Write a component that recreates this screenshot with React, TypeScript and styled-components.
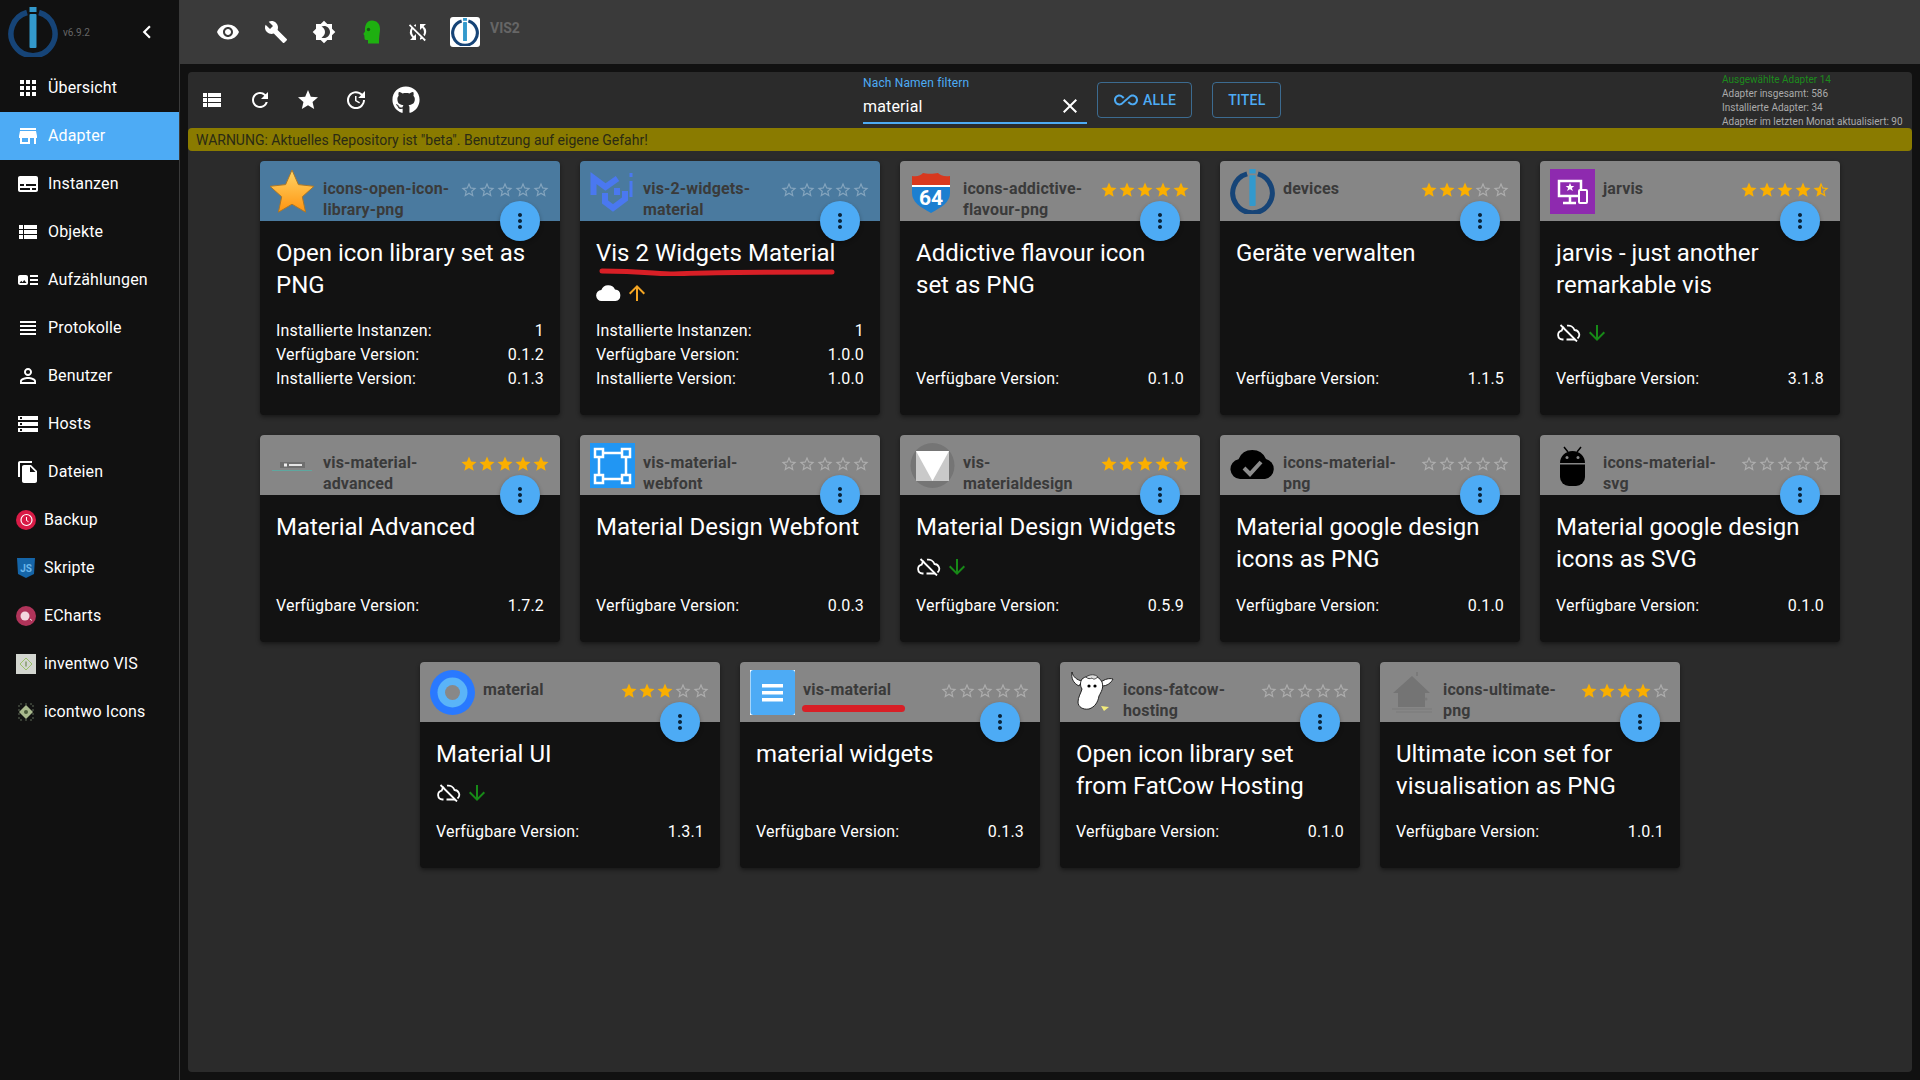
import * as React from "react";
import styled, { createGlobalStyle } from "styled-components";
import { FaGithub } from "react-icons/fa";
import {
  MdAllInclusive,
  MdApps,
  MdArrowDownward,
  MdArrowUpward,
  MdArtTrack,
  MdBrightness4,
  MdBuild,
  MdChevronLeft,
  MdClose,
  MdFileCopy,
  MdMoreVert,
  MdPersonOutline,
  MdRefresh,
  MdStar,
  MdStarBorder,
  MdStarHalf,
  MdStorage,
  MdStore,
  MdSubtitles,
  MdSyncDisabled,
  MdUpdate,
  MdViewHeadline,
  MdViewList,
  MdVisibility,
} from "react-icons/md";

const GlobalStyle = createGlobalStyle`
  html, body {
    margin: 0;
    height: 100%;
    background: #111;
    font-family: Roboto, "Liberation Sans", sans-serif;
    color: #fff;
  }
  #root {
    height: 100%;
  }
`;

/* drawings */

const IoLogo: React.FC<{ size: number }> = ({ size }) => (
  <svg width={size} height={size} viewBox="0 0 50 50">
    <path
      d="M19 5.500a22 22 0 1 0 12 0"
      fill="none"
      stroke="#164477"
      strokeWidth="5.500"
    />
    <rect x="21.500" y="0" width="7" height="5" fill="#3399cc" />
    <rect x="21.500" y="7" width="7" height="34" rx="1" fill="#3399cc" />
  </svg>
);

const StarLogo = () => (
  <svg width="45" height="45" viewBox="0 0 45 45">
    <defs>
      <linearGradient id="starFill" x1="0" y1="0" x2="0" y2="1">
        <stop offset="0" stopColor="#ffd566" />
        <stop offset="1" stopColor="#ff9410" />
      </linearGradient>
    </defs>
    <path
      d="M22 1l6.400 14.600 15.600 1.700-11.700 10.500 3.300 15.400L22 35.200 8.400 43.200l3.300-15.400L0 17.300l15.600-1.700z"
      fill="url(#starFill)"
      stroke="#a9772a"
      strokeWidth="1"
      strokeLinejoin="round"
    />
  </svg>
);

const MjLogo = () => (
  <svg width="45" height="45" viewBox="0 0 45 45" fill="none">
    <path d="M3.500 26V9l12 9 12-8.500" stroke="#4a78f0" strokeWidth="6" />
    <path d="M35 22v8l-12 9-8-6v-9" stroke="#4a78f0" strokeWidth="6" />
    <path d="M27 19v7" stroke="#4a78f0" strokeWidth="6" />
    <path d="M41 4v4M41 12v16" stroke="#4a78f0" strokeWidth="3" />
  </svg>
);

const ShieldLogo = () => (
  <svg width="45" height="45" viewBox="0 0 45 45">
    <path d="M2 7c6 1 9-1 11-3 3 1 11 1 15 0 2 2 6 4 12 3v10H2z" fill="#d8381e" />
    <rect x="2" y="16" width="38" height="2" fill="#fff" />
    <path d="M2 18h38v6c0 9-8 14-19 20C10 38 2 33 2 24z" fill="#1c7fd0" />
    <text
      x="21"
      y="36"
      fontFamily="Roboto, sans-serif"
      fontWeight="700"
      fontSize="21"
      fill="#fff"
      textAnchor="middle"
    >
      64
    </text>
  </svg>
);

const JarvisLogo = () => (
  <svg width="45" height="45" viewBox="0 0 45 45">
    <rect width="45" height="45" fill="#8e2aaf" />
    <path
      d="M9 12h22v15H9zM20 27v6M13 34h13"
      fill="none"
      stroke="#fff"
      strokeWidth="2.500"
    />
    <path
      d="M20 14l1.300 3h3l-2.400 2 1 3-2.900-1.800-2.900 1.800 1-3-2.400-2h3z"
      fill="#fff"
    />
    <rect
      x="29"
      y="21"
      width="8"
      height="13"
      rx="1"
      fill="#8e2aaf"
      stroke="#fff"
      strokeWidth="2"
    />
  </svg>
);

const BannerLogo = () => (
  <svg width="45" height="45" viewBox="0 0 45 45">
    <rect x="10" y="19" width="25" height="6" fill="#6f6f6f" />
    <rect x="14" y="20.500" width="3" height="3" fill="#eee" />
    <rect x="19" y="21" width="13" height="2" fill="#e5e5e5" />
    <rect x="2" y="27" width="40" height="1" fill="#5ea79f" />
  </svg>
);

const NodesLogo = () => (
  <svg width="45" height="45" viewBox="0 0 45 45" fill="none">
    <rect width="45" height="45" fill="#2196f3" />
    <path
      d="M12 10h21M12 36h21M9 13v20M36 13v20"
      stroke="#fff"
      strokeWidth="2.500"
    />
    <rect x="5" y="6" width="8" height="8" stroke="#fff" strokeWidth="2.500" />
    <rect x="32" y="6" width="8" height="8" stroke="#fff" strokeWidth="2.500" />
    <rect x="5" y="32" width="8" height="8" stroke="#fff" strokeWidth="2.500" />
    <rect x="32" y="32" width="8" height="8" stroke="#fff" strokeWidth="2.500" />
  </svg>
);

const TriangleLogo = () => (
  <svg width="45" height="45" viewBox="0 0 45 45">
    <ellipse cx="22.500" cy="22.500" rx="22" ry="22.500" fill="#757575" />
    <rect x="6" y="8" width="33" height="30" fill="#c9c9c9" />
    <path d="M6 8h33L22.500 38z" fill="#fff" />
  </svg>
);

const CloudCheckLogo = () => (
  <svg width="45" height="45" viewBox="0 0 45 45">
    <path
      d="M10 36a10 10 0 0 1-1.500-19.800A15 15 0 0 1 36 16a10.200 10.200 0 0 1-1 20z"
      fill="#000"
    />
    <path d="M14 25l6 6 11-12" fill="none" stroke="#8c8c8c" strokeWidth="4" />
  </svg>
);

const AndroidLogo = () => (
  <svg width="45" height="45" viewBox="0 0 45 45">
    <path d="M14 4l4 5M31 4l-4 5" stroke="#000" strokeWidth="1.500" />
    <path d="M10 20c0-7 5.500-12 12.500-12S35 13 35 20z" fill="#000" />
    <circle cx="17" cy="14.500" r="1.500" fill="#888" />
    <circle cx="28" cy="14.500" r="1.500" fill="#888" />
    <path d="M10 21.500h25V34a9 9 0 0 1-9 9h-7a9 9 0 0 1-9-9z" fill="#000" />
  </svg>
);

const RingsLogo = () => (
  <svg width="45" height="45" viewBox="0 0 45 45">
    <circle cx="22.500" cy="22.500" r="22.500" fill="#2979ff" />
    <circle cx="22.500" cy="22.500" r="15" fill="#5ab4f8" />
    <circle cx="22.500" cy="22.500" r="7.500" fill="#888" />
  </svg>
);

const DocLogo = () => (
  <svg width="45" height="45" viewBox="0 0 45 45">
    <rect width="45" height="45" fill="#fff" />
    <rect x="0.500" y="0" width="44.500" height="45" rx="3" fill="#4dabf5" />
    <rect x="12" y="14" width="21" height="3.500" fill="#fff" />
    <rect x="12" y="21" width="21" height="3.500" fill="#fff" />
    <rect x="12" y="28" width="21" height="3.500" fill="#fff" />
  </svg>
);

const CowLogo = () => (
  <svg width="45" height="45" viewBox="0 0 45 45">
    <path
      d="M12 11C7 10 3 7 2 2c-1 6 1 11 7 14zM31 12c4-3 8-4 12-3-2 4-6 7-11 7z"
      fill="#fff"
      stroke="#222"
    />
    <path
      d="M12 9c6-5 17-4 20 3 2 6-1 10-3 14-1 6-4 11-10 13-6 1-11-2-11-7 0-5 3-9 4-13-2-3-2-7 0-10z"
      fill="#fff"
      stroke="#222"
    />
    <path d="M16 7c4-3 9-3 12 0-3 2-4 3-6 1-2 1-4 1-6-1z" fill="#ddd" stroke="#444" />
    <circle cx="19" cy="16" r="1.600" fill="#000" />
    <circle cx="25" cy="16" r="1.600" fill="#000" />
    <path d="M31 36l8 1-5 4z" fill="#f3ec7a" />
  </svg>
);

const HouseLogo = () => (
  <svg width="45" height="45" viewBox="0 0 45 45">
    <path d="M22 6L3 23h5v14h27V23h5z" fill="#747474" />
    <rect x="26" y="2" width="2" height="4" fill="#7a7a7a" />
    <circle cx="36" cy="29" r="1.500" fill="#7a7a7a" />
    <path d="M2 39h40M6 42h36" stroke="#7a7a7a" />
  </svg>
);

const HeadIcon = () => (
  <svg width="18" height="24" viewBox="0 0 18 24">
    <path
      d="M9 .5c5 0 8 3.500 8 8.500 0 4-1 6-1 14.500H5V20H3c-1 0-1.500-1-1.500-2l-.2-2.800-1-1.200L2 11.500C1.500 5 4 .500 9 .5z"
      fill="#1eb010"
    />
    <circle cx="5.500" cy="9.500" r="1.700" fill="#145c10" />
  </svg>
);

const CloudIcon = () => (
  <svg width="25" height="17" viewBox="0 0 25 17">
    <path
      d="M6 17A5.500 5.500 0 0 1 5.300 6 7.500 7.500 0 0 1 19 5.500 5.800 5.800 0 0 1 19.500 17z"
      fill="#fff"
    />
  </svg>
);

const CloudOffIcon = () => (
  <svg width="25" height="18" viewBox="0 0 25 18" fill="none" stroke="#fff">
    <path
      d="M7.500 15.500H6.500a4.500 4.500 0 0 1-.8-8.900A6.500 6.500 0 0 1 8 3M11 1.700A6.500 6.500 0 0 1 18.500 6a4.800 4.800 0 0 1 3 8.500M19 15.500H10.500"
      strokeWidth="1.800"
    />
    <path d="M4.500 1L21 17.500" strokeWidth="1.800" />
  </svg>
);

const BackupIcon = () => (
  <svg width="20" height="20" viewBox="0 0 20 20">
    <circle cx="10" cy="10" r="10" fill="#d81b46" />
    <circle cx="10.500" cy="10" r="5.500" fill="none" stroke="#fff" strokeWidth="1.200" />
    <path d="M10.500 7v3.500l2 1.200" fill="none" stroke="#fff" />
  </svg>
);

const ScriptIcon = () => (
  <svg width="20" height="20" viewBox="0 0 20 20">
    <path d="M1 0h18l-1 16-8 4-8-4z" fill="#1565a8" />
    <text
      x="10"
      y="14"
      fontFamily="Roboto, sans-serif"
      fontWeight="700"
      fontSize="10"
      fill="#6bb5ea"
      textAnchor="middle"
    >
      JS
    </text>
  </svg>
);

const ChartIcon = () => (
  <svg width="20" height="20" viewBox="0 0 20 20">
    <circle cx="10" cy="10" r="10" fill="#b0345a" />
    <circle cx="9" cy="10" r="4.500" fill="#f3d7df" />
    <path d="M14 13l2 1.500" stroke="#f3d7df" />
  </svg>
);

const InventIcon = () => (
  <svg width="20" height="20" viewBox="0 0 20 20">
    <rect width="20" height="20" fill="#d3d6d0" />
    <path d="M10 4l6 6-6 6-6-6z" fill="none" stroke="#9bc06a" />
    <rect x="9.500" y="7.500" width="1" height="5" fill="#5e7a3a" />
  </svg>
);

const ChipIcon = () => (
  <svg width="20" height="20" viewBox="0 0 20 20">
    <path
      d="M2 4h2M2 8h2M2 12h2M2 16h2M16 4h2M16 8h2M16 12h2M16 16h2M5 1v2M10 1v2M15 1v2M5 17v2M10 17v2M15 17v2"
      stroke="#5f6b58"
    />
    <path d="M10 3l7 7-7 7-7-7z" fill="#a9b98d" />
    <circle cx="10" cy="10" r="2" fill="#4a5a3a" />
  </svg>
);

/* data */

const menu = [
  { label: "Übersicht", icon: <MdApps size={24} /> },
  { label: "Adapter", icon: <MdStore size={24} />, active: true },
  { label: "Instanzen", icon: <MdSubtitles size={24} /> },
  { label: "Objekte", icon: <MdViewList size={24} /> },
  { label: "Aufzählungen", icon: <MdArtTrack size={24} /> },
  { label: "Protokolle", icon: <MdViewHeadline size={24} /> },
  { label: "Benutzer", icon: <MdPersonOutline size={24} /> },
  { label: "Hosts", icon: <MdStorage size={24} /> },
  { label: "Dateien", icon: <MdFileCopy size={24} /> },
  { label: "Backup", icon: <BackupIcon /> },
  { label: "Skripte", icon: <ScriptIcon /> },
  { label: "ECharts", icon: <ChartIcon /> },
  { label: "inventwo VIS", icon: <InventIcon /> },
  { label: "icontwo Icons", icon: <ChipIcon /> },
];

type Adapter = {
  name: string;
  title: string;
  logo: React.ReactNode;
  rating: number;
  instances?: string;
  available: string;
  installed?: string;
  status?: "update" | "offline";
  scribble?: "title" | "name";
};

const adapters: Adapter[] = [
  {
    name: "icons-open-icon-library-png",
    title: "Open icon library set as PNG",
    logo: <StarLogo />,
    rating: 0,
    instances: "1",
    available: "0.1.2",
    installed: "0.1.3",
  },
  {
    name: "vis-2-widgets-material",
    title: "Vis 2 Widgets Material",
    logo: <MjLogo />,
    rating: 0,
    instances: "1",
    available: "1.0.0",
    installed: "1.0.0",
    status: "update",
    scribble: "title",
  },
  {
    name: "icons-addictive-flavour-png",
    title: "Addictive flavour icon set as PNG",
    logo: <ShieldLogo />,
    rating: 5,
    available: "0.1.0",
  },
  {
    name: "devices",
    title: "Geräte verwalten",
    logo: <IoLogo size={45} />,
    rating: 3,
    available: "1.1.5",
  },
  {
    name: "jarvis",
    title: "jarvis - just another remarkable vis",
    logo: <JarvisLogo />,
    rating: 4.5,
    available: "3.1.8",
    status: "offline",
  },
  {
    name: "vis-material-advanced",
    title: "Material Advanced",
    logo: <BannerLogo />,
    rating: 5,
    available: "1.7.2",
  },
  {
    name: "vis-material-webfont",
    title: "Material Design Webfont",
    logo: <NodesLogo />,
    rating: 0,
    available: "0.0.3",
  },
  {
    name: "vis-materialdesign",
    title: "Material Design Widgets",
    logo: <TriangleLogo />,
    rating: 5,
    available: "0.5.9",
    status: "offline",
  },
  {
    name: "icons-material-png",
    title: "Material google design icons as PNG",
    logo: <CloudCheckLogo />,
    rating: 0,
    available: "0.1.0",
  },
  {
    name: "icons-material-svg",
    title: "Material google design icons as SVG",
    logo: <AndroidLogo />,
    rating: 0,
    available: "0.1.0",
  },
  {
    name: "material",
    title: "Material UI",
    logo: <RingsLogo />,
    rating: 3,
    available: "1.3.1",
    status: "offline",
  },
  {
    name: "vis-material",
    title: "material widgets",
    logo: <DocLogo />,
    rating: 0,
    available: "0.1.3",
    scribble: "name",
  },
  {
    name: "icons-fatcow-hosting",
    title: "Open icon library set from FatCow Hosting",
    logo: <CowLogo />,
    rating: 0,
    available: "0.1.0",
  },
  {
    name: "icons-ultimate-png",
    title: "Ultimate icon set for visualisation as PNG",
    logo: <HouseLogo />,
    rating: 4,
    available: "1.0.1",
  },
];

const Rating: React.FC<{ value: number }> = ({ value }) => (
  <Stars>
    {[1, 2, 3, 4, 5].map((n) => {
      if (value >= n) return <MdStar key={n} size={18} color="#faaf00" />;
      if (value >= n - 0.5) return <MdStarHalf key={n} size={18} color="#faaf00" />;
      return <EmptyStar key={n} size={18} />;
    })}
  </Stars>
);

const AdapterCard: React.FC<Adapter> = ({
  name,
  title,
  logo,
  rating,
  instances,
  available,
  installed,
  status,
  scribble,
}) => (
  <Card>
    <CardHeader $installed={!!installed}>
      <Logo>{logo}</Logo>
      <Name>{name}</Name>
      <Rating value={rating} />
    </CardHeader>
    <Fab>
      <MdMoreVert size={24} />
    </Fab>
    {scribble === "title" && (
      <TitleScribble viewBox="0 0 236 8" width="236" height="8">
        <path
          d="M3 3c40 0 55 3 72 3 30-2 100-2 158-2"
          fill="none"
          stroke="#d81f26"
          strokeWidth="5"
          strokeLinecap="round"
        />
      </TitleScribble>
    )}
    {scribble === "name" && <NameScribble />}
    <CardBody>
      <Title>{title}</Title>
      {status === "update" && (
        <StatusRow>
          <CloudIcon />
          <MdArrowUpward size={24} color="#f5a623" />
        </StatusRow>
      )}
      {status === "offline" && (
        <StatusRow>
          <CloudOffIcon />
          <MdArrowDownward size={24} color="#178a17" />
        </StatusRow>
      )}
      <InfoList>
        {instances && (
          <InfoRow>
            <span>Installierte Instanzen:</span>
            <span>{instances}</span>
          </InfoRow>
        )}
        <InfoRow>
          <span>Verfügbare Version:</span>
          <span>{available}</span>
        </InfoRow>
        {installed && (
          <InfoRow>
            <span>Installierte Version:</span>
            <span>{installed}</span>
          </InfoRow>
        )}
      </InfoList>
    </CardBody>
  </Card>
);

export default function App() {
  return (
    <>
      <GlobalStyle />
      <Page>
        <Sidebar>
          <Brand>
            <IoLogo size={50} />
            <Version>v6.9.2</Version>
            <Collapse>
              <MdChevronLeft size={26} />
            </Collapse>
          </Brand>
          {menu.map((item) => (
            <MenuItem key={item.label} $active={item.active}>
              {item.icon}
              <MenuLabel>{item.label}</MenuLabel>
            </MenuItem>
          ))}
        </Sidebar>

        <Main>
          <TopBar>
            <IconButton>
              <MdVisibility size={24} />
            </IconButton>
            <IconButton>
              <MdBuild size={24} />
            </IconButton>
            <IconButton>
              <MdBrightness4 size={24} />
            </IconButton>
            <IconButton>
              <HeadIcon />
            </IconButton>
            <SyncButton>
              <MdSyncDisabled size={24} />
            </SyncButton>
            <HostLogo>
              <IoLogo size={28} />
            </HostLogo>
            <HostName>VIS2</HostName>
          </TopBar>

          <Content>
            <Panel>
              <Toolbar>
                <ToolIcons>
                  <IconButton>
                    <MdViewList size={24} />
                  </IconButton>
                  <IconButton>
                    <MdRefresh size={24} />
                  </IconButton>
                  <IconButton>
                    <MdStar size={24} />
                  </IconButton>
                  <IconButton>
                    <MdUpdate size={24} />
                  </IconButton>
                  <GithubButton>
                    <FaGithub size={28} />
                  </GithubButton>
                </ToolIcons>
                <Filter>
                  <FilterLabel>Nach Namen filtern</FilterLabel>
                  <FilterInput>
                    <span>material</span>
                    <MdClose size={24} />
                  </FilterInput>
                </Filter>
                <OutlineButton>
                  <MdAllInclusive size={24} />
                  ALLE
                </OutlineButton>
                <OutlineButton>TITEL</OutlineButton>
                <Stats>
                  <StatLine $green>Ausgewählte Adapter 14</StatLine>
                  <StatLine>Adapter insgesamt: 586</StatLine>
                  <StatLine>Installierte Adapter: 34</StatLine>
                  <StatLine>Adapter im letzten Monat aktualisiert: 90</StatLine>
                </Stats>
              </Toolbar>
              <Warning>
                WARNUNG: Aktuelles Repository ist "beta". Benutzung auf eigene Gefahr!
              </Warning>
              <CardGrid>
                {adapters.map((adapter) => (
                  <AdapterCard key={adapter.name} {...adapter} />
                ))}
              </CardGrid>
            </Panel>
          </Content>
        </Main>
      </Page>
    </>
  );
}

const Page = styled.div`
  display: flex;
  height: 100vh;
  overflow: hidden;
  background: #111;
`;

const Sidebar = styled.nav`
  width: 180px;
  flex-shrink: 0;
  box-sizing: border-box;
  border-right: 1px solid #3a3a3a;
  background: #111;
`;

const Brand = styled.div`
  display: flex;
  align-items: center;
  height: 64px;
  padding-left: 8px;
`;

const Version = styled.span`
  margin-left: 5px;
  font-size: 10px;
  color: #666;
`;

const Collapse = styled.div`
  display: flex;
  margin-left: 44px;
  color: #fff;
`;

const MenuItem = styled.div<{ $active?: boolean }>`
  display: flex;
  align-items: center;
  gap: 8px;
  height: 48px;
  padding-left: 16px;
  color: #fff;
  background: ${(p) => (p.$active ? "#4dabf5" : "transparent")};
`;

const MenuLabel = styled.span`
  margin-bottom: 2px;
  font-size: 16px;
  letter-spacing: 0.15px;
`;

const Main = styled.div`
  flex: 1;
  min-width: 0;
  display: flex;
  flex-direction: column;
`;

const TopBar = styled.header`
  display: flex;
  align-items: center;
  flex-shrink: 0;
  height: 64px;
  padding-left: 24px;
  background: #3a3a3a;
`;

const IconButton = styled.div`
  display: flex;
  align-items: center;
  justify-content: center;
  width: 48px;
  height: 48px;
  color: #fff;
`;

const SyncButton = styled(IconButton)`
  padding-right: 4px;
  box-sizing: border-box;
`;

const GithubButton = styled(IconButton)`
  padding-left: 4px;
  box-sizing: border-box;
`;

const HostLogo = styled.div`
  display: flex;
  align-items: center;
  justify-content: center;
  width: 30px;
  height: 30px;
  margin-left: 6px;
  border-radius: 3px;
  background: #fff;
`;

const HostName = styled.span`
  margin: 0 0 8px 10px;
  font-size: 14px;
  font-weight: 700;
  color: #666;
`;

const Content = styled.main`
  flex: 1;
  min-height: 0;
  display: flex;
  padding: 8px;
`;

const Panel = styled.section`
  flex: 1;
  border-radius: 4px;
  background: #2b2b2b;
`;

const Toolbar = styled.div`
  display: flex;
  align-items: center;
  height: 56px;
`;

const ToolIcons = styled.div`
  display: flex;
  width: 240px;
`;

const Filter = styled.div`
  display: flex;
  flex-direction: column;
  width: 224px;
  height: 48px;
  margin-left: 435px;
  border-bottom: 2px solid #4dabf5;
  box-sizing: border-box;
`;

const FilterLabel = styled.label`
  font-size: 12px;
  line-height: 14px;
  letter-spacing: 0.15px;
  color: #4dabf5;
`;

const FilterInput = styled.div`
  display: flex;
  align-items: center;
  justify-content: space-between;
  flex: 1;
  padding-right: 5px;
  font-size: 16px;
  letter-spacing: 0.15px;
  color: #fff;
`;

const OutlineButton = styled.div`
  display: flex;
  align-items: center;
  gap: 5px;
  height: 36px;
  margin-left: 10px;
  padding: 0 15px;
  box-sizing: border-box;
  border: 1px solid rgba(77, 171, 245, 0.5);
  border-radius: 4px;
  font-size: 14px;
  font-weight: 500;
  letter-spacing: 0.2px;
  color: #4dabf5;

  & + & {
    margin-left: 20px;
  }

  svg {
    margin-left: 1px;
  }
`;

const Stats = styled.div`
  display: flex;
  flex-direction: column;
  width: 190px;
  margin-left: auto;
  margin-top: 2px;
`;

const StatLine = styled.span<{ $green?: boolean }>`
  font-size: 10px;
  line-height: 14px;
  white-space: nowrap;
  color: ${(p) => (p.$green ? "#1c8a1c" : "#aaa")};
`;

const Warning = styled.div`
  box-sizing: border-box;
  height: 23px;
  padding: 1px 0 0 8px;
  border-radius: 4px;
  font-size: 14px;
  line-height: 23px;
  color: #2b2b14;
  background: #8a7b00;
`;

const CardGrid = styled.div`
  display: flex;
  flex-wrap: wrap;
  justify-content: center;
  gap: 20px;
  padding-top: 10px;
`;

const Card = styled.article`
  position: relative;
  display: flex;
  flex-direction: column;
  width: 300px;
  min-height: 206.5px;
  border-radius: 4px;
  background: #121212;
  box-shadow: 0 2px 4px rgba(0, 0, 0, 0.45);
`;

const CardHeader = styled.div<{ $installed: boolean }>`
  display: flex;
  align-items: flex-start;
  flex-shrink: 0;
  height: 60px;
  padding: 0 10px;
  border-radius: 4px 4px 0 0;
  background: ${(p) => (p.$installed ? "#4a7a9f" : "#868686")};
`;

const Logo = styled.div`
  flex-shrink: 0;
  width: 45px;
  height: 45px;
  margin-top: 8px;

  svg {
    display: block;
  }
`;

const Name = styled.div`
  width: 133px;
  flex-shrink: 0;
  margin-left: 8px;
  padding-top: 17px;
  font-size: 16px;
  font-weight: 700;
  line-height: 21px;
  letter-spacing: 0.15px;
  color: #3a3a3a;
`;

const Stars = styled.div`
  display: flex;
  flex-shrink: 0;
  margin-top: 20px;
  margin-left: auto;
`;

const EmptyStar = styled(MdStarBorder)`
  color: rgba(255, 255, 255, 0.32);
`;

const Fab = styled.div`
  position: absolute;
  top: 40px;
  right: 20px;
  display: flex;
  align-items: center;
  justify-content: center;
  width: 40px;
  height: 40px;
  border-radius: 50%;
  color: #0a2338;
  background: #4dabf5;
  box-shadow: 0 2px 4px rgba(0, 0, 0, 0.3);
`;

const TitleScribble = styled.svg`
  position: absolute;
  top: 107px;
  left: 19px;
`;

const NameScribble = styled.div`
  position: absolute;
  top: 43px;
  left: 62px;
  width: 103px;
  height: 7px;
  border-radius: 4px;
  background: #d81f26;
`;

const CardBody = styled.div`
  flex: 1;
  display: flex;
  flex-direction: column;
  justify-content: space-between;
  padding: 16px 16px 24px;
`;

const Title = styled.h2`
  margin: 0;
  font-size: 24px;
  font-weight: 400;
  line-height: 32px;
  color: #fff;
`;

const StatusRow = styled.div`
  display: flex;
  align-items: center;
  gap: 4px;
  height: 24px;
  margin-bottom: -15px;
`;

const InfoList = styled.div`
  margin-top: 18px;
`;

const InfoRow = styled.div`
  display: flex;
  justify-content: space-between;
  font-size: 16px;
  line-height: 24px;
  letter-spacing: 0.15px;
  color: #fff;
`;
